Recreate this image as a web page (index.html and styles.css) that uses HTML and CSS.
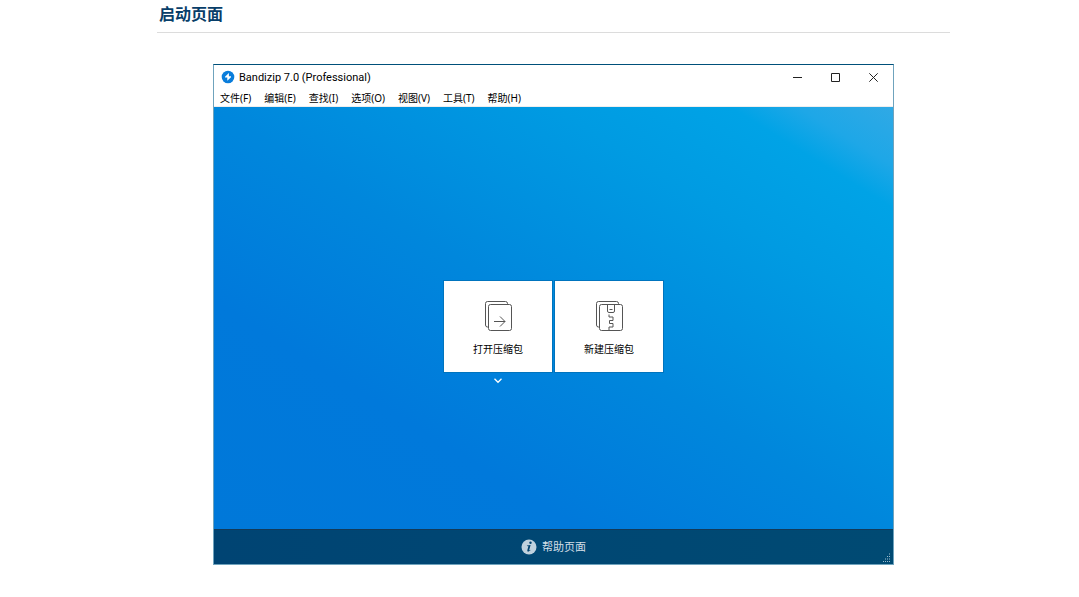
FILE: index.html
```html
<!DOCTYPE html>
<html lang="zh-CN">
<head>
<meta charset="utf-8">
<meta name="viewport" content="width=device-width, initial-scale=1">
<title>启动页面</title>
<link rel="stylesheet" href="styles.css">
</head>
<body>
<main class="page">
  <h2 class="page-title">启动页面</h2>
  <section class="window" aria-label="Bandizip">
    <header class="titlebar">
      <svg class="app-icon" viewBox="0 0 14 14" aria-hidden="true">
        <circle cx="7" cy="7" r="6.3" fill="#0a7ddb"/>
        <path d="M7.900 3 4 6.700v.9h2.300v3.200L10 7.200v-.9H7.900z" fill="#fff"/>
      </svg>
      <h1 class="window-title">Bandizip 7.0 (Professional)</h1>
      <div class="controls">
        <button class="control" type="button" aria-label="最小化"><svg class="control-icon" viewBox="0 0 9 9"><path d="M0 4.5h9"/></svg></button>
        <button class="control" type="button" aria-label="最大化"><svg class="control-icon" viewBox="0 0 9 9"><path d="M.5.5h8v8h-8z"/></svg></button>
        <button class="control" type="button" aria-label="关闭"><svg class="control-icon" viewBox="0 0 9 9"><path d="m.3.3 8.4 8.4M8.7.3.3 8.7"/></svg></button>
      </div>
    </header>
    <nav class="menu">
      <button class="menu-item" type="button">文件(F)</button>
      <button class="menu-item" type="button">编辑(E)</button>
      <button class="menu-item" type="button">查找(I)</button>
      <button class="menu-item" type="button">选项(O)</button>
      <button class="menu-item" type="button">视图(V)</button>
      <button class="menu-item" type="button">工具(T)</button>
      <button class="menu-item" type="button">帮助(H)</button>
    </nav>
    <div class="stage">
      <div class="tiles">
        <button class="tile" type="button">
          <svg class="tile-icon" viewBox="0 0 28 32" aria-hidden="true">
            <path d="M4 27H3.500Q1.500 27 1.500 25V3.500Q1.500 1.500 3.500 1.500H21.500Q23.500 1.500 23.500 3.500V4.500"/>
            <rect x="4.500" y="4.500" width="23" height="26" rx="2"/>
            <path d="M10 21.500h11M16 16.500l5 5-5 5"/>
          </svg>
          <span>打开压缩包</span>
        </button>
        <button class="tile" type="button">
          <svg class="tile-icon" viewBox="0 0 28 32" aria-hidden="true">
            <path d="M4 27H3.500Q1.500 27 1.500 25V3.500Q1.500 1.500 3.500 1.500H21.500Q23.500 1.500 23.500 3.500V4.500"/>
            <rect x="4.500" y="4.500" width="23" height="26" rx="2"/>
            <path d="M12.500 4.500V11q0 1.500 1.500 1.500h4q1.500 0 1.500-1.500V4.500M14.500 9.500h3"/>
            <path d="M14 14.500v2.500h4v3.500h-3.500v3H18V27h-4v3.500"/>
          </svg>
          <span>新建压缩包</span>
        </button>
        <button class="recent" type="button" aria-label="最近的文件">
          <svg class="recent-icon" viewBox="0 0 8 6"><path d="m.5.8 3.500 3.500L7.500.8"/></svg>
        </button>
      </div>
    </div>
    <footer class="footer">
      <button class="help" type="button">
        <svg class="help-icon" viewBox="0 0 16 16" aria-hidden="true">
          <circle cx="8" cy="8" r="7.500" fill="#bfd1de"/>
          <circle cx="9.500" cy="3.800" r="1.200" fill="#00426f"/>
          <path d="M6 6.500 9.600 6 8.200 10.900Q8.100 11.600 9.500 10.700L9.300 11.600Q6.100 13.800 6.300 11.300L7.400 7.300 5.900 7.100z" fill="#00426f"/>
        </svg>
        <span>帮助页面</span>
      </button>
      <svg class="grip" viewBox="0 0 9 9" aria-hidden="true">
        <path d="M7 1h1M5 3.500h1M7 3.500h1M3 6h1M5 6h1M7 6h1M1 8.500h1M3 8.500h1M5 8.500h1M7 8.500h1"/>
      </svg>
    </footer>
  </section>
</main>
</body>
</html>
```
FILE: styles.css
```css
* {
  box-sizing: border-box;
}

body {
  margin: 0;
  background: #fff;
  color: #000;
  font-family: "Noto Sans", "Noto Sans CJK SC", sans-serif;
}

button {
  margin: 0;
  padding: 0;
  border: 0;
  background: none;
  color: inherit;
  font: inherit;
}

svg {
  display: block;
  flex: none;
}

.page {
  padding: 0 129px 32px 157px;
}

.page-title {
  margin: 0 0 31px;
  padding: 2px 2px 6px;
  border-bottom: 1px solid #dcdcdc;
  color: #083e69;
  font-size: 16px;
  font-weight: 700;
  line-height: 24px;
}

.window {
  display: flex;
  flex-direction: column;
  max-width: 681px;
  margin: 0 auto;
  border: 1px solid #6fa3bd;
  border-top-color: #00507a;
}

.titlebar {
  display: flex;
  align-items: center;
  height: 24px;
  padding-left: 7px;
}

.app-icon {
  width: 14px;
  height: 14px;
}

.window-title {
  margin: 0 auto 0 4px;
  padding-top: 2px;
  font-family: Roboto, sans-serif;
  font-size: 11px;
  font-weight: 400;
  line-height: 16px;
}

.controls {
  display: flex;
  padding-right: 1px;
}

.control {
  display: grid;
  place-items: center;
  width: 38px;
  height: 24px;
}

.control-icon {
  width: 9px;
  height: 9px;
  fill: none;
  stroke: #222;
}

.menu {
  display: flex;
  gap: 13px;
  height: 18px;
  padding: 0 6px;
  border-bottom: 1px solid #eee;
}

.menu-item {
  font-size: 10px;
  line-height: 18px;
  white-space: nowrap;
}

.stage {
  min-height: 422px;
  padding-top: 174px;
  background: linear-gradient(to top right, #0078d9 0%, #0079db 27%, #0087dc 50%, #009be2 75%, #00a3e6 88%, #1ea7e7 93%, #30a9e5 100%);
}

.tiles {
  display: grid;
  grid-template-columns: 108px 108px;
  justify-content: center;
  column-gap: 3px;
}

.tile {
  display: flex;
  flex-direction: column;
  align-items: center;
  gap: 10px;
  padding: 19px 0 15px;
  background: #fff;
  box-shadow: 0 0 0 1px #0074be;
  font-size: 10px;
  line-height: 15px;
}

.tile-icon {
  width: 28px;
  height: 32px;
  fill: none;
  stroke: #555;
}

.recent {
  display: grid;
  place-items: center;
  height: 18px;
}

.recent-icon {
  width: 8px;
  height: 6px;
  fill: none;
  stroke: #fff;
  stroke-width: 1.3;
}

.footer {
  display: grid;
  grid-template-columns: 1fr auto 1fr;
  align-items: center;
  height: 35px;
  border-top: 1px solid #123a59;
  background: linear-gradient(to right, #004473, #004a73);
}

.help {
  display: flex;
  grid-column: 2;
  align-items: center;
  gap: 5px;
  color: #d3dee7;
  font-size: 11px;
  line-height: 16px;
}

.help-icon {
  width: 16px;
  height: 16px;
}

.grip {
  align-self: end;
  justify-self: end;
  width: 9px;
  height: 9px;
  margin: 2px;
  stroke: #9dbccd;
}
```
